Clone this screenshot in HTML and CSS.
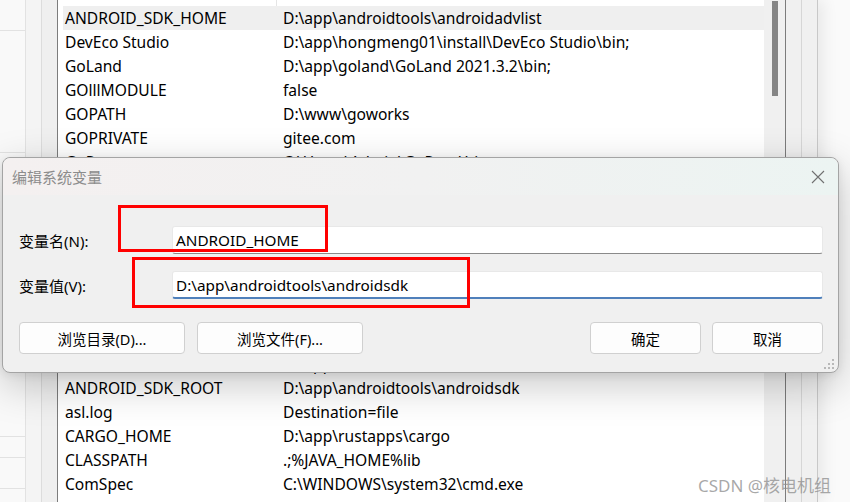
FILE: index.html
```html
<!DOCTYPE html>
<html lang="zh-CN">
<head>
<meta charset="utf-8">
<title>编辑系统变量</title>
<link rel="stylesheet" href="styles.css">
</head>
<body>
<div class="desk">
  <div class="window">
    <div class="nav">
      <div class="nav-item h1"></div>
      <div class="nav-item h2"></div>
      <div class="nav-item h3"></div>
      <div class="nav-item h4"></div>
      <div class="nav-item h5"></div>
    </div>
    <div class="strip s1"></div>
    <div class="strip s2"></div>
    <div class="list">
      <div class="list-content">
        <div class="list-header"><span class="hsep"></span></div>
        <div class="row selected"><span class="name">ANDROID_SDK_HOME</span><span class="val">D:\app\androidtools\androidadvlist</span></div>
        <div class="row"><span class="name">DevEco Studio</span><span class="val">D:\app\hongmeng01\install\DevEco Studio\bin;</span></div>
        <div class="row"><span class="name">GoLand</span><span class="val">D:\app\goland\GoLand 2021.3.2\bin;</span></div>
        <div class="row"><span class="name">GOlllMODULE</span><span class="val">false</span></div>
        <div class="row"><span class="name">GOPATH</span><span class="val">D:\www\goworks</span></div>
        <div class="row"><span class="name">GOPRIVATE</span><span class="val">gitee.com</span></div>
        <div class="row"><span class="name">GoRoot</span><span class="val">C:\Users\Admin\GoRoot\bin</span></div>
        <div class="gap"></div>
        <div class="row"><span class="name">ANDROID_HOME</span><span class="val">D:\app\androidtools\androidsdk</span></div>
        <div class="row"><span class="name">ANDROID_SDK_ROOT</span><span class="val">D:\app\androidtools\androidsdk</span></div>
        <div class="row"><span class="name">asl.log</span><span class="val">Destination=file</span></div>
        <div class="row"><span class="name">CARGO_HOME</span><span class="val">D:\app\rustapps\cargo</span></div>
        <div class="row"><span class="name">CLASSPATH</span><span class="val">.;%JAVA_HOME%lib</span></div>
        <div class="row"><span class="name">ComSpec</span><span class="val">C:\WINDOWS\system32\cmd.exe</span></div>
      </div>
      <div class="scrollbar"><div class="thumb"></div></div>
    </div>
    <div class="strip s3"></div>
    <div class="strip s4"></div>
  </div>

  <div class="dialog">
    <div class="titlebar">
      <span class="title">编辑系统变量</span>
      <svg class="close" width="14" height="14" viewBox="0 0 14 14"><path d="M1 1 L13 13 M13 1 L1 13" stroke="#707070" stroke-width="1.1" fill="none"/></svg>
    </div>
    <div class="body">
      <div class="field">
        <label class="label">变量名(N):</label>
        <div class="input">ANDROID_HOME</div>
      </div>
      <div class="field">
        <label class="label">变量值(V):</label>
        <div class="input focused">D:\app\androidtools\androidsdk</div>
      </div>
      <div class="buttons">
        <div class="group">
          <div class="btn wide">浏览目录(D)...</div>
          <div class="btn wide">浏览文件(F)...</div>
        </div>
        <div class="group">
          <div class="btn">确定</div>
          <div class="btn">取消</div>
        </div>
      </div>
    </div>
    <svg class="grip" width="10" height="10" viewBox="0 0 10 10">
      <rect x="8" y="0" width="2" height="2" fill="#b8b8b8"/>
      <rect x="4" y="4" width="2" height="2" fill="#b8b8b8"/>
      <rect x="8" y="4" width="2" height="2" fill="#b8b8b8"/>
      <rect x="0" y="8" width="2" height="2" fill="#b8b8b8"/>
      <rect x="4" y="8" width="2" height="2" fill="#b8b8b8"/>
      <rect x="8" y="8" width="2" height="2" fill="#b8b8b8"/>
    </svg>
    <div class="mark mark1"></div>
    <div class="mark mark2"></div>
  </div>

  <div class="watermark">CSDN @核电机组</div>
</div>
</body>
</html>
```

FILE: styles.css
```css
* { box-sizing: border-box; }
html, body { margin: 0; padding: 0; }
body {
  width: 850px;
  height: 502px;
  overflow: hidden;
  background: #fafafa;
  font-family: "Noto Sans", "Noto Sans CJK SC", sans-serif;
  font-size: 15.6px;
  color: #000;
}
.desk {
  position: relative;
  width: 850px;
  height: 502px;
}
.window {
  display: flex;
  width: 818px;
  height: 502px;
  box-shadow: 6px 0 14px rgba(0,0,0,0.07);
}
.nav {
  width: 26px;
  background: #f9f9f9;
  border-right: 1px solid #e2e2e2;
  display: flex;
  flex-direction: column;
}
.nav-item { border-bottom: 1px solid #e2e2e2; }
.nav-item.h1 { height: 31px; }
.nav-item.h2 { height: 122px; }
.nav-item.h3 { height: 284px; }
.nav-item.h4 { height: 21px; }
.nav-item.h5 { height: 31px; }
.strip { width: 16px; }
.s1 { background: #f4f4f4; border-right: 1px solid #dcdcdc; }
.s2 { background: #efefef; border-right: 1px solid #7c7c7c; }
.s3 { background: #f0f0f0; border-right: 1px solid #d6d6d6; }
.s4 { background: #f0f0f0; border-right: 1px solid #c8c8c8; }
.list {
  width: 728px;
  display: flex;
  background: #fff;
  border-right: 1px solid #7c7c7c;
}
.list-content {
  width: 706px;
  padding-left: 5px;
  display: flex;
  flex-direction: column;
  overflow: hidden;
}
.list-header {
  height: 6px;
  position: relative;
  flex: none;
}
.hsep {
  position: absolute;
  left: 213px;
  top: 0;
  width: 1px;
  height: 6px;
  background: #e5e5e5;
}
.row {
  flex: none;
  height: 24px;
  display: grid;
  grid-template-columns: 218px 1fr;
  align-items: center;
  line-height: 24px;
  white-space: nowrap;
}
.row.selected { background: #efefef; }
.row .name, .row .val { padding-left: 2px; overflow: hidden; }
.gap { flex: none; height: 178px; }
.scrollbar {
  width: 21px;
  background: #f0f0f0;
  display: flex;
  justify-content: center;
  padding-top: 1px;
}
.thumb {
  width: 6px;
  height: 95px;
  background: #858585;
  margin-left: 1px;
}

/* dialog */
.dialog {
  position: absolute;
  left: 2px;
  top: 157px;
  width: 837px;
  height: 216px;
  border: 1px solid #a4a4a4;
  border-radius: 8px;
  background: #f0f0f0;
  box-shadow: 0 12px 40px rgba(0,0,0,0.22), 0 2px 8px rgba(0,0,0,0.08);
  display: flex;
  flex-direction: column;
  font-size: 15.3px;
}
.titlebar {
  height: 37px;
  flex: none;
  display: flex;
  align-items: center;
  justify-content: space-between;
  padding: 0 13px 0 9px;
  border-radius: 8px 8px 0 0;
  background: linear-gradient(90deg, #f4f0f0 0%, #f1f1f1 50%, #ecf4f2 100%);
}
.title {
  color: #8c8c8c;
  font-family: "Noto Sans CJK SC", sans-serif;
  font-size: 15px;
}
.close { display: block; }
.body {
  flex: 1;
  padding: 31px 15px 0 15px;
  display: flex;
  flex-direction: column;
}
.field {
  display: flex;
  align-items: center;
  height: 28px;
  margin-bottom: 17px;
}
.label {
  width: 154px;
  padding-left: 1px;
  font-family: "Noto Sans", "Noto Sans CJK SC", sans-serif;
  font-size: 15px;
}
.input {
  flex: 1;
  height: 28px;
  background: #fff;
  border: 1px solid #e8e8e8;
  border-bottom: 1px solid #8a8a8a;
  border-radius: 3px;
  padding-left: 3px;
  line-height: 26px;
  white-space: nowrap;
}
.input.focused { border-bottom: 2px solid #4f80bb; }
.buttons {
  display: flex;
  justify-content: space-between;
  margin-top: 6px;
  padding-left: 1px;
}
.group { display: flex; gap: 11px; }
.group:first-child { gap: 12px; }
.btn {
  width: 111px;
  height: 32px;
  background: #fdfdfd;
  border: 1px solid #d0d0d0;
  border-radius: 4px;
  display: flex;
  align-items: center;
  justify-content: center;
  font-size: 14.5px;
}
.btn.wide { width: 166px; }
.grip {
  position: absolute;
  right: 4px;
  bottom: 3px;
}
.mark {
  position: absolute;
  border: 3px solid #ff0000;
}
.mark1 { left: 115px; top: 47px; width: 210px; height: 47px; }
.mark2 { left: 129px; top: 99px; width: 338px; height: 51px; }

.watermark {
  position: absolute;
  left: 698px;
  top: 472px;
  font-family: "Noto Sans", "Noto Sans CJK SC", sans-serif;
  font-size: 17px;
  color: rgba(140,140,140,0.75);
  white-space: nowrap;
}
```
